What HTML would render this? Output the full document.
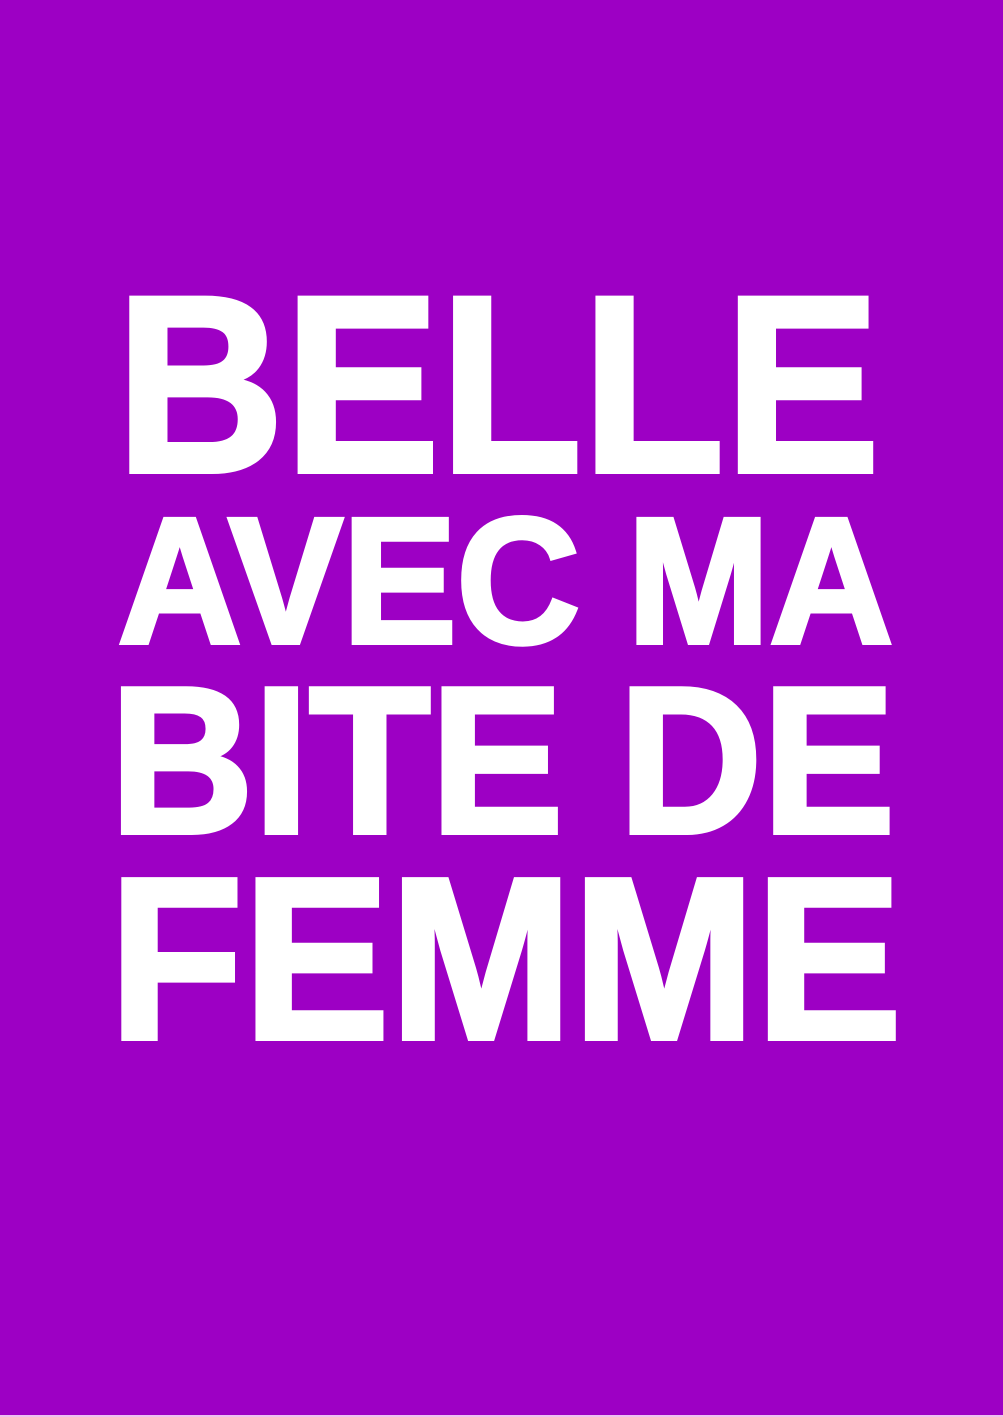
<!DOCTYPE html>
<html><head><meta charset="utf-8"><style>
html,body{margin:0;padding:0;width:1003px;height:1417px;overflow:hidden;background:#9d00c4}
svg{display:block}
</style></head><body>
<svg width="1003" height="1417" viewBox="0 0 1003 1417">
<rect width="1003" height="1415" fill="#9d00c4"/>
<rect y="1415" width="1003" height="2" fill="#f0c0f0"/>
<g fill="#fff" stroke="#fff" stroke-width="5" stroke-linejoin="miter" font-family="Liberation Sans, Arial, sans-serif" font-weight="bold">
<text x="116" y="471.5" font-size="252" textLength="764" lengthAdjust="spacingAndGlyphs">BELLE</text>
<text x="118" y="642.5" font-size="179" textLength="775" lengthAdjust="spacingAndGlyphs">AVEC MA</text>
<text x="110" y="832.5" font-size="209" textLength="785" lengthAdjust="spacingAndGlyphs">BITE DE</text>
<text x="109" y="1038.5" font-size="231" textLength="793" lengthAdjust="spacingAndGlyphs">FEMME</text>
</g>
</svg>
</body></html>
